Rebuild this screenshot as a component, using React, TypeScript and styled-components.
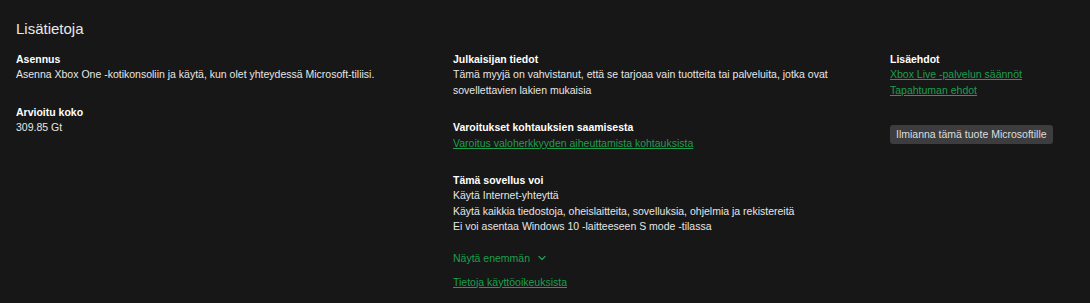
import React from "react";
import styled, { createGlobalStyle } from "styled-components";
import { ChevronDown } from "lucide-react";

const GlobalStyle = createGlobalStyle`
  html, body {
    margin: 0;
    padding: 0;
    background: #171717;
  }
  body {
    font-family: "Liberation Sans", Arial, sans-serif;
    color: #e6e6e6;
  }
`;

const Page = styled.div`
  width: 1090px;
  height: 303px;
  box-sizing: border-box;
  padding: 20px 16px 0 16px;
  background: #171717;
  overflow: hidden;
`;

const Title = styled.h2`
  margin: 0 0 14px 0;
  font-size: 15px;
  font-weight: 400;
  line-height: 18px;
  color: #e8e8e8;
`;

const Columns = styled.div`
  display: grid;
  grid-template-columns: 380px 380px 1fr;
  column-gap: 57px;
  align-items: start;
`;

const Column = styled.div`
  display: flex;
  flex-direction: column;
  gap: 22px;
`;

const Section = styled.div`
  display: flex;
  flex-direction: column;
  font-size: 10.5px;
  line-height: 15.4px;
`;

const Heading = styled.div`
  font-weight: 700;
  color: #ffffff;
`;

const Text = styled.div`
  color: #e6e6e6;
`;

const Link = styled.a`
  color: #1e9e4e;
  text-decoration: underline;
  text-underline-offset: 1px;
  cursor: pointer;
  align-self: flex-start;
`;

const More = styled.button`
  display: inline-flex;
  align-items: center;
  gap: 6px;
  align-self: flex-start;
  padding: 0;
  margin: -6px 0 0 0;
  border: none;
  background: none;
  font: inherit;
  font-size: 10.5px;
  line-height: 15px;
  color: #1e9e4e;
  cursor: pointer;
`;

const Report = styled.button`
  align-self: flex-start;
  margin-top: 5px;
  height: 19px;
  padding: 0 6px;
  border: none;
  border-radius: 3px;
  background: #3d3d3f;
  color: #dedede;
  font-family: inherit;
  font-size: 10.5px;
  line-height: 19px;
  cursor: pointer;
`;

const App = () => {
  return (
    <Page>
      <GlobalStyle />
      <Title>Lisätietoja</Title>
      <Columns>
        <Column>
          <Section>
            <Heading>Asennus</Heading>
            <Text>
              Asenna Xbox One -kotikonsoliin ja käytä, kun olet yhteydessä
              Microsoft-tiliisi.
            </Text>
          </Section>
          <Section>
            <Heading>Arvioitu koko</Heading>
            <Text>309.85 Gt</Text>
          </Section>
        </Column>
        <Column>
          <Section>
            <Heading>Julkaisijan tiedot</Heading>
            <Text>
              Tämä myyjä on vahvistanut, että se tarjoaa vain tuotteita tai
              palveluita, jotka ovat sovellettavien lakien mukaisia
            </Text>
          </Section>
          <Section>
            <Heading>Varoitukset kohtauksien saamisesta</Heading>
            <Link>Varoitus valoherkkyyden aiheuttamista kohtauksista</Link>
          </Section>
          <Section>
            <Heading>Tämä sovellus voi</Heading>
            <Text>Käytä Internet-yhteyttä</Text>
            <Text>
              Käytä kaikkia tiedostoja, oheislaitteita, sovelluksia, ohjelmia ja
              rekistereitä
            </Text>
            <Text>Ei voi asentaa Windows 10 -laitteeseen S mode -tilassa</Text>
          </Section>
          <More>
            Näytä enemmän
            <ChevronDown size={12} strokeWidth={2.6} />
          </More>
          <Section style={{ marginTop: -13 }}>
            <Link>Tietoja käyttöoikeuksista</Link>
          </Section>
        </Column>
        <Column>
          <Section>
            <Heading>Lisäehdot</Heading>
            <Link>Xbox Live -palvelun säännöt</Link>
            <Link>Tapahtuman ehdot</Link>
          </Section>
          <Report>Ilmianna tämä tuote Microsoftille</Report>
        </Column>
      </Columns>
    </Page>
  );
};

export default App;
